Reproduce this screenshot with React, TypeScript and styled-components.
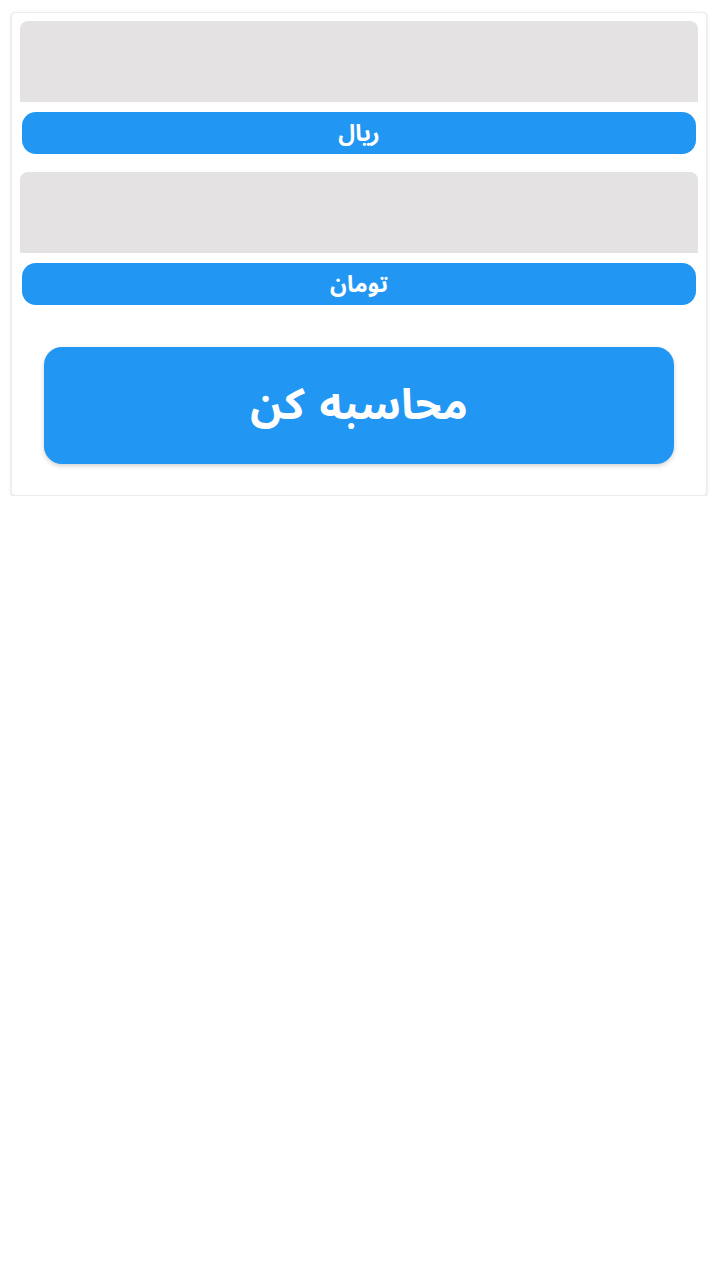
import React from 'react';
import styled, { createGlobalStyle } from 'styled-components';

const GlobalStyle = createGlobalStyle`
  html, body {
    margin: 0;
    padding: 0;
    background: #ffffff;
  }
  body {
    font-family: "Noto Sans Arabic", "DejaVu Sans", "Noto Sans", sans-serif;
  }
`;

export const Page = styled.div`
  padding: 12px 12px 0 11px;
`;

export const Card = styled.section`
  direction: rtl;
  background: #fff;
  border: 1px solid #ececec;
  border-radius: 4px;
  box-shadow: 0 1px 3px rgba(0, 0, 0, 0.14);
  padding: 8px 8px 31px 8px;
`;

export const Field = styled.div`
  display: flex;
  flex-direction: column;
  margin-bottom: 18px;

  &:last-of-type {
    margin-bottom: 0;
  }
`;

export const InputBox = styled.input`
  height: 81px;
  border: none;
  outline: none;
  background: #e4e2e3;
  border-radius: 8px 8px 0 0;
  padding: 0 12px;
  font-size: 22px;
  font-family: inherit;
  box-sizing: border-box;
  width: 100%;
`;

export const UnitLabel = styled.div`
  margin: 10px 2px 0;
  height: 42px;
  border-radius: 14px;
  background: #2196f3;
  color: #fff;
  font-weight: bold;
  font-size: 23px;
  display: flex;
  align-items: center;
  justify-content: center;
`;

export const CalcButton = styled.button`
  display: flex;
  align-items: center;
  justify-content: center;
  margin: 42px 24px 0;
  width: calc(100% - 48px);
  height: 117px;
  border: none;
  border-radius: 18px;
  background: #2196f3;
  color: #fff;
  font-family: inherit;
  font-weight: bold;
  font-size: 43px;
  word-spacing: 4px;
  box-shadow: 0 2px 5px rgba(0, 0, 0, 0.18);
  cursor: pointer;
`;

const units = ['ریال', 'تومان'];

const App = () => {
  return (
    <>
      <GlobalStyle />
      <Page>
        <Card>
          {units.map((u) => (
            <Field key={u}>
              <InputBox />
              <UnitLabel>{u}</UnitLabel>
            </Field>
          ))}
          <CalcButton>محاسبه کن</CalcButton>
        </Card>
      </Page>
    </>
  );
};

export default App;
